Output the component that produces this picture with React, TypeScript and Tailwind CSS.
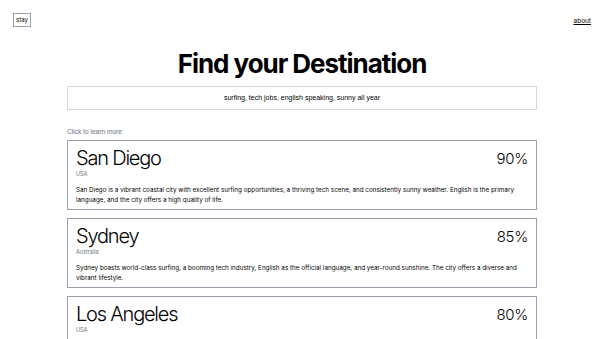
import React from "react";

const results = [
  {
    city: "San Diego",
    country: "USA",
    score: 90,
    text: "San Diego is a vibrant coastal city with excellent surfing opportunities, a thriving tech scene, and consistently sunny weather. English is the primary language, and the city offers a high quality of life.",
  },
  {
    city: "Sydney",
    country: "Australia",
    score: 85,
    text: "Sydney boasts world-class surfing, a booming tech industry, English as the official language, and year-round sunshine. The city offers a diverse and vibrant lifestyle.",
  },
  {
    city: "Los Angeles",
    country: "USA",
    score: 80,
    text: "Los Angeles combines famous surf beaches, a large tech sector, English as the main language and sunshine almost every day of the year.",
  },
];

export default function App() {
  return (
    <div className="min-h-screen bg-white text-black font-['Inter','Liberation_Sans',sans-serif]">
      {/* Header */}
      <header className="flex items-start justify-between px-[13px] pt-[13px]">
        <div className="border border-gray-400 px-[2px] py-[2px] text-[6px] leading-[8px]">stay</div>
        <a href="#" className="mt-[4px] text-[6.5px] underline">about</a>
      </header>

      <main className="mx-auto w-[470px]">
        <h1 className="mt-[21px] text-center text-[26px] font-bold leading-[32px] tracking-[-0.04em]">
          Find your Destination
        </h1>

        <div className="mt-[6px] flex h-[24px] items-center justify-center border border-gray-300 font-['Liberation_Sans',sans-serif] text-[7px]">
          surfing, tech jobs, english speaking, sunny all year
        </div>

        <p className="mt-[18px] font-['Liberation_Sans',sans-serif] text-[6.6px] leading-[8px] text-gray-500">Click to learn more</p>

        <div className="mt-[4px] flex flex-col gap-[8px]">
          {results.map((r) => (
            <div key={r.city} className="border border-gray-400 px-[8px] pt-[5px] pb-[4px]">
              <div className="flex items-start justify-between">
                <h2 className="text-[20px] font-light leading-[24px] tracking-[-0.06em]">{r.city}</h2>
                <span className="mt-[4px] text-[15px] font-light leading-[18px] tracking-[-0.02em]">{r.score}%</span>
              </div>
              <p className="text-[5.5px] leading-[8px] text-gray-500">{r.country}</p>
              <p className="mt-[8px] text-[6.3px] leading-[9.5px]">{r.text}</p>
            </div>
          ))}
        </div>
      </main>
    </div>
  );
}
